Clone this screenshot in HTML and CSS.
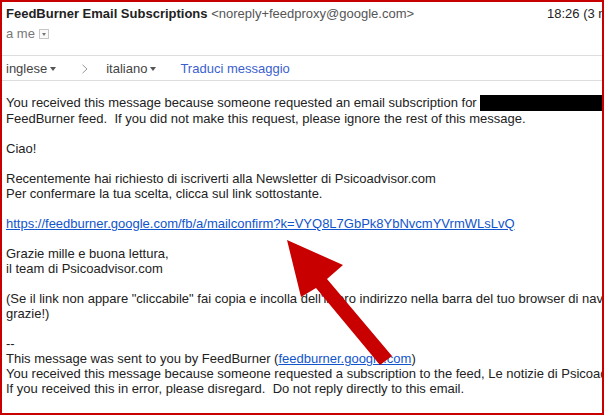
FILE: index.html
```html
<!DOCTYPE html>
<html lang="it">
  <head>
    <meta charset="utf-8">
    <title>FeedBurner Email Subscriptions</title>
    <link rel="stylesheet" href="styles.css">
  </head>
  <body>

  <div class="frame">

    <div class="head">
      <div class="from">
        <span><b class="sender">FeedBurner Email Subscriptions</b> <span class="addr">&lt;noreply+feedproxy@google.com&gt;</span></span>
        <span class="time">18:26 (3 minuti fa)</span>
      </div>
      <div class="to">a me <span class="drop"><i></i></span></div>
    </div>

    <div class="tbar">
      <span class="lang">inglese <i class="caret"></i></span>
      <svg class="chev" width="6" height="10" viewBox="0 0 6 10"><path d="M0.5 0.8 L5 5 L0.5 9.2" fill="none" stroke="#999" stroke-width="1"/></svg>
      <span class="lang">italiano <i class="caret"></i></span>
      <a class="translate" href="#">Traduci messaggio</a>
    </div>

    <div class="body">
      <p>You received this message because someone requested an email subscription for <span class="redact"></span><br>
      FeedBurner feed.&nbsp; If you did not make this request, please ignore the rest of this message.</p>

      <p>Ciao!</p>

      <p>Recentemente hai richiesto di iscriverti alla Newsletter di Psicoadvisor.com<br>
      Per confermare la tua scelta, clicca sul link sottostante.</p>

      <p><a href="#">https://feedburner.google.com/fb/a/mailconfirm?k=VYQ8L7GbPk8YbNvcmYVrmWLsLvQ</a></p>

      <p>Grazie mille e buona lettura,<br>
      il team di Psicoadvisor.com</p>

      <p>(Se il link non appare "cliccabile" fai copia e incolla dell'intero indirizzo nella barra del tuo browser di navigazione e<br>
      grazie!)</p>

      <p>--<br>
      This message was sent to you by FeedBurner (<a href="#">feedburner.google.com</a>)<br>
      You received this message because someone requested a subscription to the feed, Le notizie di Psicoadvisor.<br>
      If you received this in error, please disregard.&nbsp; Do not reply directly to this email.</p>
    </div>

    <svg class="arrow" width="605" height="416" viewBox="0 0 605 416">
      <polygon points="287,240 343,265 327,279 392,356 380,365 316,288 301,297" fill="#c80000"/>
    </svg>

  </div>

  </body>
</html>
```

FILE: styles.css
```css
html, body {
  margin: 0;
  padding: 0;
  background: #fff;
}

body {
  font-family: "Liberation Sans", Arial, sans-serif;
  font-size: 13px;
  line-height: 15px;
  color: #222;
}

a {
  color: #1155cc;
}

.frame {
  position: relative;
  width: 604px;
  height: 415px;
  box-sizing: border-box;
  border: 2px solid #c80000;
  overflow: hidden;
  white-space: nowrap;
}

.head {
  padding: 4px 4px 0;
}

.from {
  display: grid;
  grid-template-columns: 541px auto;
}

.sender {
  color: #222;
}

.addr {
  color: #555;
}

.time {
  color: #222;
}

.to {
  margin-top: 5px;
  color: #777;
  display: flex;
  align-items: center;
}

.drop {
  display: inline-block;
  position: relative;
  width: 8px;
  height: 8px;
  margin-left: 4px;
  border: 1px solid #c6c6c6;
  background: #fafafa;
}

.drop i {
  position: absolute;
  left: 2px;
  top: 3px;
  border-left: 2px solid transparent;
  border-right: 2px solid transparent;
  border-top: 3px solid #777;
}

.tbar {
  margin-top: 14px;
  padding: 5px 4px 4px;
  border-top: 1px solid #ddd;
  border-bottom: 1px solid #ddd;
  display: flex;
  align-items: center;
  color: #444;
}

.lang {
  display: inline-flex;
  align-items: center;
}

.caret {
  display: inline-block;
  margin-left: 3px;
  border-left: 3.5px solid transparent;
  border-right: 3.5px solid transparent;
  border-top: 4px solid #555;
}

.chev {
  margin: 0 18px 0 26px;
}

.translate {
  margin-left: 24px;
  color: #3b5fcf;
  text-decoration: none;
}

.body {
  padding: 14px 4px 0;
}

.body p {
  margin: 0 0 15px;
}

.redact {
  display: inline-block;
  width: 140px;
  height: 16px;
  background: #000;
  vertical-align: -4px;
}

.arrow {
  position: absolute;
  left: -2px;
  top: -2px;
}
```
